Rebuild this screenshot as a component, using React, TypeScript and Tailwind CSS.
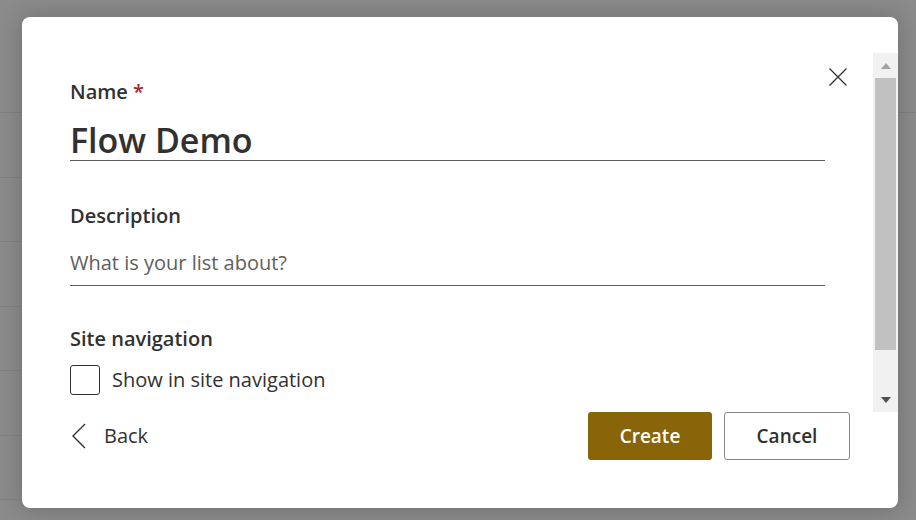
import React from 'react';

const rows = [0, 1, 2, 3, 4, 5, 6, 7];

export default function App() {
  return (
    <div className="relative h-[520px] w-[916px] overflow-hidden bg-[#8b8b8b]" style={{ fontFamily: '"Open Sans", "Noto Sans", sans-serif' }}>
      {/* list behind the overlay */}
      <div className="flex flex-col pt-[48px]">
        <div className="h-[65px] border-b border-[#808080]" />
        {rows.map((r) => (
          <div key={r} className="mr-[820px] h-[64.5px] border-b border-[#828282]" />
        ))}
      </div>

      {/* dialog */}
      <div className="absolute left-[22px] top-[17px] flex h-[491px] w-[876px] flex-col rounded-[8px] bg-white shadow-[0_0_24px_rgba(0,0,0,0.22)]">
        <div className="mt-[36px] flex h-[359px]">
          <div className="flex flex-1 pl-[48px] pt-[25px]">
            <div className="flex w-[755px] flex-col text-[#323130]">
              <label className="h-[28px] text-[20px] font-semibold leading-[28px]">
                Name <span className="text-[#a4262c]">*</span>
              </label>
              <div className="mt-[14px] h-[41px] border-b border-[#605e5c] text-[34px] font-semibold leading-[40px]">
                Flow Demo
              </div>
              <label className="mt-[41px] h-[28px] text-[20px] font-semibold leading-[28px]">Description</label>
              <div className="mt-[19px] h-[37px] border-b border-[#605e5c] text-[20px] leading-[28px] text-[#605e5c]">
                What is your list about?
              </div>
              <label className="mt-[39px] h-[28px] text-[20px] font-semibold leading-[28px]">Site navigation</label>
              <div className="mt-[12px] flex items-center gap-[12px]">
                <div className="h-[30px] w-[30px] rounded-[3px] border border-[#323130]" />
                <span className="text-[20px] leading-[28px]">Show in site navigation</span>
              </div>
            </div>
            <button className="ml-[3px] mt-[-11px] flex h-[20px] w-[20px] items-center justify-center text-[#323130]">
              <svg width="20" height="20" viewBox="0 0 20 20" fill="none" stroke="currentColor" strokeWidth="1.2">
                <path d="M1.5 1.5 L18.5 18.5 M18.5 1.5 L1.5 18.5" />
              </svg>
            </button>
          </div>

          {/* scrollbar */}
          <div className="flex w-[25px] flex-col items-center bg-[#f1f1f1]">
            <div className="flex h-[25px] items-center justify-center">
              <svg width="10" height="6" viewBox="0 0 10 6"><path d="M0 6 L5 0 L10 6 Z" fill="#a3a3a3" /></svg>
            </div>
            <div className="h-[272px] w-[21px] bg-[#c1c1c1]" />
            <div className="flex-1" />
            <div className="flex h-[25px] items-center justify-center">
              <svg width="10" height="6" viewBox="0 0 10 6"><path d="M0 0 L10 0 L5 6 Z" fill="#505050" /></svg>
            </div>
          </div>
        </div>

        {/* footer */}
        <div className="flex items-center pl-[48px] pr-[48px]">
          <button className="flex items-center gap-[16px] text-[#323130]">
            <svg width="18" height="26" viewBox="0 0 18 26" fill="none" stroke="#323130" strokeWidth="1.4">
              <path d="M15 1 L3 13 L15 25" />
            </svg>
            <span className="text-[20px] leading-[28px]">Back</span>
          </button>
          <div className="ml-auto flex gap-[12px]">
            <button className="h-[48px] w-[124px] rounded-[3px] bg-[#8a6409] text-[19px] font-semibold text-white">Create</button>
            <button className="h-[48px] w-[126px] rounded-[3px] border border-[#8a8886] bg-white text-[19px] font-semibold text-[#323130]">Cancel</button>
          </div>
        </div>
      </div>
    </div>
  );
}
